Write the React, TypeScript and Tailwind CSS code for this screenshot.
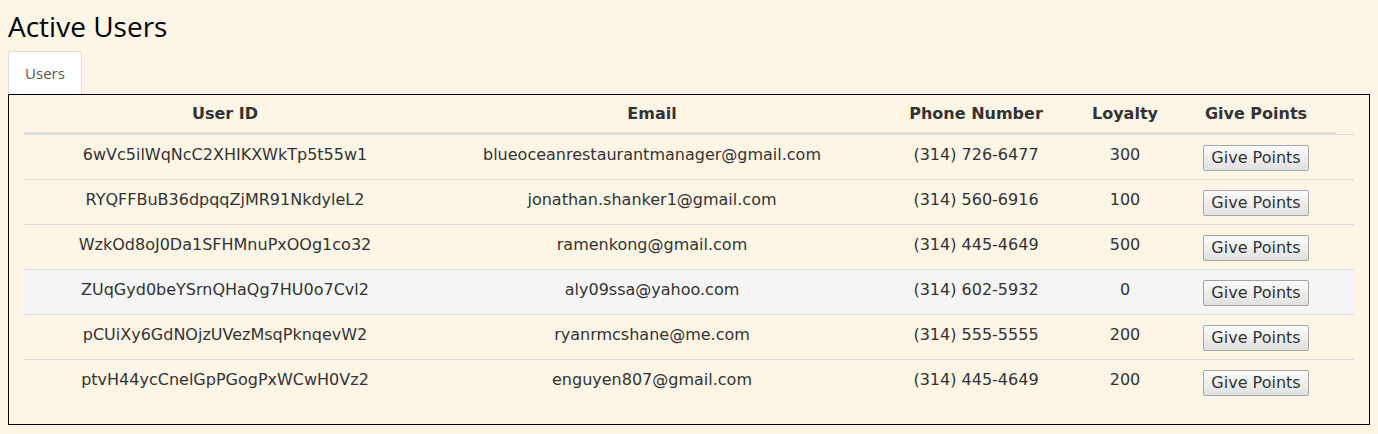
const users = [
  { id: "6wVc5ilWqNcC2XHIKXWkTp5t55w1", email: "blueoceanrestaurantmanager@gmail.com", phone: "(314) 726-6477", loyalty: 300 },
  { id: "RYQFFBuB36dpqqZjMR91NkdyleL2", email: "jonathan.shanker1@gmail.com", phone: "(314) 560-6916", loyalty: 100 },
  { id: "WzkOd8oJ0Da1SFHMnuPxOOg1co32", email: "ramenkong@gmail.com", phone: "(314) 445-4649", loyalty: 500 },
  { id: "ZUqGyd0beYSrnQHaQg7HU0o7Cvl2", email: "aly09ssa@yahoo.com", phone: "(314) 602-5932", loyalty: 0 },
  { id: "pCUiXy6GdNOjzUVezMsqPknqevW2", email: "ryanrmcshane@me.com", phone: "(314) 555-5555", loyalty: 200 },
  { id: "ptvH44ycCnelGpPGogPxWCwH0Vz2", email: "enguyen807@gmail.com", phone: "(314) 445-4649", loyalty: 200 },
];

const UserRow = ({ user, hovered }: { user: (typeof users)[number]; hovered: boolean }) => (
  <div
    className={`flex h-[45px] items-start border-t border-[#ddd] pt-[10px] leading-[19px] ${
      hovered ? "bg-[#f5f5f5]" : ""
    }`}
  >
    <div className="w-[402px] text-center">{user.id}</div>
    <div className="w-[452px] text-center">{user.email}</div>
    <div className="w-[196px] text-center">{user.phone}</div>
    <div className="w-[102px] text-center">{user.loyalty}</div>
    <div className="flex w-[160px] justify-center">
      <button className="h-[26px] rounded-[2px] border border-[#a6a6a6] bg-gradient-to-b from-[#fbfbfb] to-[#e1e1e1] px-[7px] text-[16px] leading-none text-[#333]">
        Give Points
      </button>
    </div>
  </div>
);

export default function App() {
  return (
    <div className="min-h-[434px] bg-[#fdf5e6] px-2 pt-[6px] font-['DejaVu_Sans',sans-serif] text-[#333]">
      <h1 className="font-['Open_Sans',sans-serif] text-[28px] leading-[40px] text-black">Active Users</h1>

      <div className="mt-[5px] flex">
        <div className="h-[43px] w-[74px] rounded-t-[3px] border border-b-0 border-[#ddd] bg-white pt-[10px] text-center font-['Open_Sans',sans-serif] text-[15px] text-[#555]">
          Users
        </div>
      </div>

      <div className="border border-black px-[15px] pb-[20px] text-[16px]">
        {/* header */}
        <div className="flex h-[39px] w-[1312px] items-center border-b-2 border-[#ddd] font-bold">
          <div className="w-[402px] text-center">User ID</div>
          <div className="w-[452px] text-center">Email</div>
          <div className="w-[196px] text-center">Phone Number</div>
          <div className="w-[102px] text-center">Loyalty</div>
          <div className="w-[160px] text-center">Give Points</div>
        </div>
        {users.map((u, i) => (
          <UserRow key={u.id} user={u} hovered={i === 3} />
        ))}
      </div>
    </div>
  );
}
